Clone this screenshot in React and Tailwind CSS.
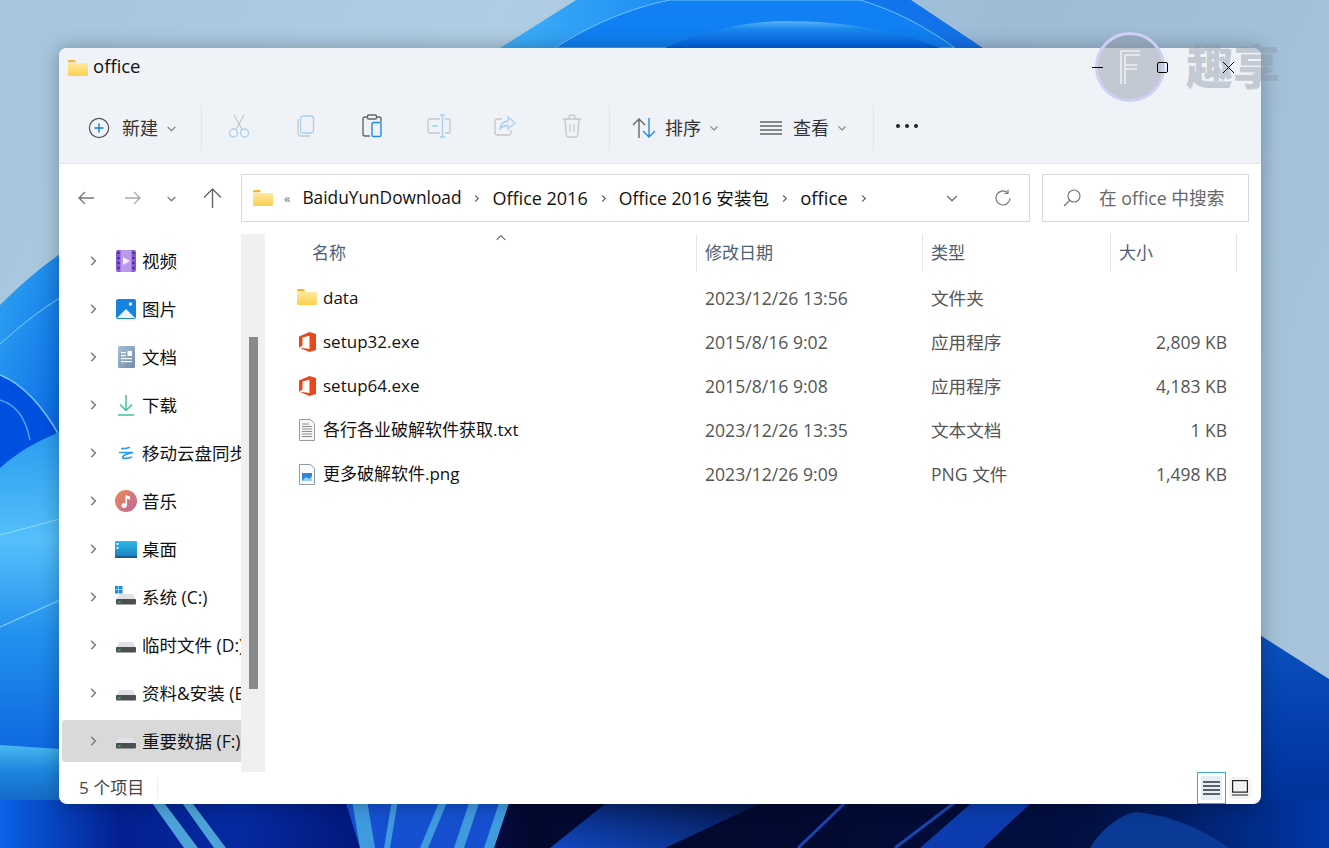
import React from 'react'

const sideItems = [
  { label: '视频', icon: 'video' },
  { label: '图片', icon: 'picture' },
  { label: '文档', icon: 'doc' },
  { label: '下载', icon: 'download' },
  { label: '移动云盘同步盘', icon: 'cloud' },
  { label: '音乐', icon: 'music' },
  { label: '桌面', icon: 'desktop' },
  { label: '系统 (C:)', icon: 'system' },
  { label: '临时文件 (D:)', icon: 'drive' },
  { label: '资料&安装 (E:)', icon: 'drive' },
  { label: '重要数据 (F:)', icon: 'drive', active: true },
]

const files = [
  { name: 'data', date: '2023/12/26 13:56', type: '文件夹', size: '', icon: 'folder' },
  { name: 'setup32.exe', date: '2015/8/16 9:02', type: '应用程序', size: '2,809 KB', icon: 'office' },
  { name: 'setup64.exe', date: '2015/8/16 9:08', type: '应用程序', size: '4,183 KB', icon: 'office' },
  { name: '各行各业破解软件获取.txt', date: '2023/12/26 13:35', type: '文本文档', size: '1 KB', icon: 'txt' },
  { name: '更多破解软件.png', date: '2023/12/26 9:09', type: 'PNG 文件', size: '1,498 KB', icon: 'png' },
]

function FolderIcon({ className }) {
  return (
    <svg className={className} width="20" height="16" viewBox="0 0 20 16">
      <defs>
        <linearGradient id="folderFill" x1="0" y1="0" x2="0" y2="1">
          <stop offset="0" stopColor="#ffe9a0" />
          <stop offset="1" stopColor="#fcd04e" />
        </linearGradient>
      </defs>
      <path d="M0 1.500C0 .7.6 0 1.400 0h5l2 2.200H0z" fill="#f5b52a" />
      <path d="M0 3h18.600c.8 0 1.400.6 1.400 1.400v10.200c0 .8-.6 1.400-1.400 1.400H1.400C.6 16 0 15.400 0 14.600z" fill="url(#folderFill)" />
    </svg>
  )
}

function Chevron({ dir = 'right', size = 10, color = '#777', width = 1.2 }) {
  const d = {
    right: 'M3.500 1.500 7 5 3.500 8.500',
    down: 'M1.500 3.500 5 7l3.500-3.500',
    up: 'M1.500 6.500 5 3l3.500 3.500',
  }[dir]
  return (
    <svg width={size} height={size} viewBox="0 0 10 10" fill="none" stroke={color} strokeWidth={width}>
      <path d={d} />
    </svg>
  )
}

function ToolIcon({ name }) {
  const gray = '#c3c7cb'
  const blue = '#a9cff0'
  if (name === 'new') {
    return (
      <svg width="22" height="22" viewBox="0 0 22 22" fill="none">
        <circle cx="11" cy="11" r="9.600" stroke="#555" strokeWidth="1.200" />
        <path d="M11 6.500v9M6.500 11h9" stroke="#0f7fd8" strokeWidth="1.400" />
      </svg>
    )
  }
  if (name === 'cut') {
    return (
      <svg width="22" height="24" viewBox="0 0 22 24" fill="none" stroke={blue} strokeWidth="1.300">
        <path d="M6 1l8.400 15M16 1L7.600 16" stroke={gray} />
        <circle cx="5.500" cy="19" r="4" />
        <circle cx="16.500" cy="19" r="4" />
      </svg>
    )
  }
  if (name === 'copy') {
    return (
      <svg width="18" height="22" viewBox="0 0 18 22" fill="none" strokeWidth="1.300">
        <path d="M1 4v14c0 1.600 1.200 3 3 3h9" stroke={gray} />
        <rect x="3.500" y="1" width="13" height="17" rx="2.500" stroke={blue} />
      </svg>
    )
  }
  if (name === 'paste') {
    return (
      <svg width="20" height="24" viewBox="0 0 20 24" fill="none" strokeWidth="1.400">
        <path d="M5 3H3C1.800 3 1 3.800 1 5v15c0 1.200.8 2 2 2h5M15 3h2c1 0 2 .8 2 2v3" stroke="#666" />
        <rect x="5.500" y="1" width="9" height="4" rx="1.200" stroke="#666" />
        <rect x="10" y="8.500" width="9" height="14" rx="1.600" stroke="#1f8be0" />
      </svg>
    )
  }
  if (name === 'rename') {
    return (
      <svg width="24" height="24" viewBox="0 0 24 24" fill="none" strokeWidth="1.300">
        <path d="M13 5H3C1.800 5 1 5.800 1 7v10c0 1.200.8 2 2 2h10M18 5h3c1.200 0 2 .8 2 2v10c0 1.200-.8 2-2 2h-3" stroke={gray} />
        <path d="M13 1h5M13 23h5M15.500 1v22M5 12h6" stroke={blue} />
      </svg>
    )
  }
  if (name === 'share') {
    return (
      <svg width="22" height="22" viewBox="0 0 22 22" fill="none" strokeWidth="1.300">
        <path d="M8 4H3.500C2 4 1 5 1 6.500v11C1 19 2 20 3.500 20h11c1.500 0 2.500-1 2.500-2.500V15" stroke={gray} />
        <path d="M14 2l7 6-7 6v-3.500c-4 0-6.500 1-8 4 .3-5 3-8 8-8.500z" stroke={blue} />
      </svg>
    )
  }
  if (name === 'trash') {
    return (
      <svg width="20" height="24" viewBox="0 0 20 24" fill="none" stroke={gray} strokeWidth="1.300">
        <path d="M1 5h18M7 5V3c0-1 .8-2 2-2h2c1.200 0 2 1 2 2v2M3 5l1.200 15.500C4.300 22 5.300 23 6.500 23h7c1.200 0 2.200-1 2.300-2.500L17 5M8 10v8M12 10v8" />
      </svg>
    )
  }
  if (name === 'sort') {
    return (
      <svg width="24" height="22" viewBox="0 0 24 22" fill="none" strokeWidth="1.400">
        <path d="M7 21V2M1 8l6-6 6 6" stroke="#666" />
        <path d="M17 1v19M11 14l6 6 6-6" stroke="#1f8be0" />
      </svg>
    )
  }
  return (
    <svg width="22" height="14" viewBox="0 0 22 14" fill="none" stroke="#666" strokeWidth="1.300">
      <path d="M0 1h22M0 5h22M0 9h22M0 13h22" />
    </svg>
  )
}

function ToolButton({ icon, className }) {
  return (
    <div className={`flex h-[46px] w-[48px] items-center justify-center pb-[4px] ${className || ''}`}>
      <ToolIcon name={icon} />
    </div>
  )
}

function DriveIcon({ win }) {
  return (
    <svg width="22" height="22" viewBox="0 0 22 22">
      {win && (
        <g fill="#1f8ae0">
          <rect x="0" y="0" width="3.500" height="3.500" />
          <rect x="4" y="0" width="3.500" height="3.500" />
          <rect x="0" y="4" width="3.500" height="3.500" />
          <rect x="4" y="4" width="3.500" height="3.500" />
        </g>
      )}
      <path d="M4.500 8h13L21 13H1z" fill="#dfe3e8" />
      <rect x="1" y="13" width="20" height="5.500" rx="1" fill="#4a4f54" />
      <rect x="3.500" y="15.500" width="2" height="1.200" fill="#5fd35f" />
    </svg>
  )
}

function SideIcon({ name }) {
  if (name === 'video') {
    return (
      <svg width="20" height="22" viewBox="0 0 20 22">
        <rect width="20" height="22" rx="2" fill="#8a55d8" />
        <rect x="4.500" y="0" width="11" height="22" fill="#b79aeb" />
        <path d="M7 7l7 4-7 4z" fill="#f3edff" />
        <g fill="#3f2a70">
          <rect x="1.500" y="2" width="2" height="2" />
          <rect x="1.500" y="7" width="2" height="2" />
          <rect x="1.500" y="12" width="2" height="2" />
          <rect x="1.500" y="17" width="2" height="2" />
          <rect x="16.500" y="2" width="2" height="2" />
          <rect x="16.500" y="7" width="2" height="2" />
          <rect x="16.500" y="12" width="2" height="2" />
          <rect x="16.500" y="17" width="2" height="2" />
        </g>
      </svg>
    )
  }
  if (name === 'picture') {
    return (
      <svg width="20" height="20" viewBox="0 0 20 20">
        <rect width="20" height="20" rx="2" fill="#1684dc" />
        <circle cx="14.500" cy="5" r="1.700" fill="#fff" />
        <path d="M1 19l9-9 9 9z" fill="#eef4f9" />
      </svg>
    )
  }
  if (name === 'doc') {
    return (
      <svg width="17" height="22" viewBox="0 0 17 22">
        <defs>
          <linearGradient id="docFill" x1="0" y1="0" x2="1" y2="1">
            <stop offset="0" stopColor="#a9bfd8" />
            <stop offset="1" stopColor="#6f8ba9" />
          </linearGradient>
        </defs>
        <rect width="17" height="22" rx="1.500" fill="url(#docFill)" />
        <g fill="#fff">
          <rect x="3" y="6" width="5" height="1.200" />
          <rect x="3" y="9" width="5" height="1.200" />
          <rect x="9.500" y="5" width="4.500" height="5" />
          <rect x="3" y="12" width="11" height="1.200" />
          <rect x="3" y="15" width="11" height="1.200" />
        </g>
      </svg>
    )
  }
  if (name === 'download') {
    return (
      <svg width="16" height="21" viewBox="0 0 16 21" fill="none" stroke="#3cc3a0" strokeWidth="1.500">
        <path d="M8 0v15M2 9.500l6 6 6-6M0 20h16" />
      </svg>
    )
  }
  if (name === 'cloud') {
    return (
      <svg width="16" height="14" viewBox="0 0 16 14" fill="none" stroke="#2a9af3" strokeWidth="1.700">
        <path d="M3 2.500c3 .4 6 0 9-1.200M1 6.500h14c-4 .8-10 2.500-10.500 4.500-.4 2 5.500 1.800 9.500 0" />
      </svg>
    )
  }
  if (name === 'music') {
    return (
      <svg width="22" height="22" viewBox="0 0 22 22">
        <defs>
          <linearGradient id="musicFill" x1="0" y1="0" x2="1" y2="1">
            <stop offset="0" stopColor="#ee8a4f" />
            <stop offset="1" stopColor="#c0679f" />
          </linearGradient>
        </defs>
        <circle cx="11" cy="11" r="11" fill="url(#musicFill)" />
        <circle cx="9" cy="15.500" r="2.500" fill="#fff" />
        <path d="M10.500 15.500V5l4.500 1.500v3l-3-.8v6.800z" fill="#fff" />
      </svg>
    )
  }
  if (name === 'desktop') {
    return (
      <svg width="22" height="17" viewBox="0 0 22 17">
        <defs>
          <linearGradient id="deskFill" x1="0" y1="0" x2="0" y2="1">
            <stop offset="0" stopColor="#30b8e8" />
            <stop offset="1" stopColor="#1a80c0" />
          </linearGradient>
        </defs>
        <rect width="22" height="16" rx="1" fill="url(#deskFill)" />
        <rect x="1.500" y="2" width="2" height="2" fill="#dff6ff" />
        <rect x="1.500" y="6" width="2" height="2" fill="#dff6ff" />
        <rect y="15" width="22" height="2" fill="#16628f" />
      </svg>
    )
  }
  if (name === 'system') return <DriveIcon win />
  return <DriveIcon />
}

function FileIcon({ name }) {
  if (name === 'folder') return <FolderIcon className="mb-[3px]" />
  if (name === 'office') {
    return (
      <svg width="17" height="20" viewBox="0 0 17 20">
        <path d="M0 4.500 10.500 0 17 2v16l-6.500 2L0 15.500l10.500 1.500V3.800L3.500 5.500v8L0 15.500z" fill="#e8491c" />
      </svg>
    )
  }
  if (name === 'txt') {
    return (
      <svg width="16" height="22" viewBox="0 0 16 22" fill="none">
        <path d="M.5.500h11l4 4v17H.5z" fill="#f7f7f7" stroke="#9a9a9a" />
        <path d="M3 5h7M3 7.500h10M3 10h10M3 12.500h10M3 15h10M3 17.500h10" stroke="#8c8c8c" />
      </svg>
    )
  }
  return (
    <svg width="16" height="21" viewBox="0 0 16 21" fill="none">
      <path d="M.5.500h11l4 4v16H.5z" fill="#fbfbfb" stroke="#8d99ad" />
      <rect x="3" y="9" width="10" height="8" fill="#2f86d8" />
      <path d="M3 17l4-4 3 2 3-3v5z" fill="#9ad0f5" />
    </svg>
  )
}

function Wallpaper() {
  return (
    <svg className="absolute inset-0" width="1329" height="848" viewBox="0 0 1329 848">
      <defs>
        <linearGradient id="sky" x1="0" y1="0" x2="1" y2="0.300">
          <stop offset="0" stopColor="#a6c6de" />
          <stop offset="0.350" stopColor="#b0cde3" />
          <stop offset="0.700" stopColor="#9dbcd6" />
          <stop offset="1" stopColor="#a6c3da" />
        </linearGradient>
        <linearGradient id="bloomOuter" x1="0" y1="0" x2="1" y2="0">
          <stop offset="0" stopColor="#3fb0f8" />
          <stop offset="0.500" stopColor="#0f7df0" />
          <stop offset="1" stopColor="#1470e8" />
        </linearGradient>
        <linearGradient id="bloomInner" x1="0" y1="0" x2="0" y2="1">
          <stop offset="0" stopColor="#5ab2f5" />
          <stop offset="0.300" stopColor="#1a88f0" />
          <stop offset="1" stopColor="#0062e4" />
        </linearGradient>
        <linearGradient id="leftA" x1="0" y1="0" x2="1" y2="1">
          <stop offset="0" stopColor="#2fa5f2" />
          <stop offset="1" stopColor="#0a6ae6" />
        </linearGradient>
        <linearGradient id="leftB" x1="0" y1="0" x2="0" y2="1">
          <stop offset="0" stopColor="#2a9cf0" />
          <stop offset="0.330" stopColor="#55c0fb" />
          <stop offset="0.620" stopColor="#2290ee" />
          <stop offset="1" stopColor="#0c66e0" />
        </linearGradient>
        <linearGradient id="leftC" x1="0" y1="0" x2="0" y2="1">
          <stop offset="0" stopColor="#48b8ee" />
          <stop offset="0.250" stopColor="#1d86de" />
          <stop offset="1" stopColor="#06399a" />
        </linearGradient>
        <linearGradient id="rightBlue" x1="0" y1="0" x2="0" y2="1">
          <stop offset="0" stopColor="#0a52c0" />
          <stop offset="0.600" stopColor="#0238a4" />
          <stop offset="1" stopColor="#012a86" />
        </linearGradient>
        <linearGradient id="floor" x1="0" y1="0" x2="1" y2="0">
          <stop offset="0" stopColor="#0a62e8" />
          <stop offset="0.090" stopColor="#03208f" />
          <stop offset="0.180" stopColor="#052aa0" />
          <stop offset="0.260" stopColor="#021a80" />
          <stop offset="0.400" stopColor="#03082f" />
          <stop offset="0.600" stopColor="#020a30" />
          <stop offset="0.820" stopColor="#021042" />
          <stop offset="1" stopColor="#0038a8" />
        </linearGradient>
        <linearGradient id="ribbon" x1="1" y1="0" x2="0" y2="1">
          <stop offset="0" stopColor="#03123f" />
          <stop offset="1" stopColor="#1048c0" />
        </linearGradient>
      </defs>
      <rect width="1329" height="848" fill="url(#sky)" />

      {/* top bloom */}
      <path d="M500 48 576 0H911L983 48z" fill="url(#bloomOuter)" />
      <path d="M555 48C590 25 630 8 670 0H860C900 12 930 30 955 48z" fill="#1080f2" stroke="#6cc4f4" strokeWidth="1" />
      <path d="M665 48C700 32 745 21 788 21 845 21 900 32 940 48z" fill="url(#bloomInner)" />

      {/* left petals */}
      <path d="M0 305C20 285 40 268 60 254V440L0 420z" fill="url(#leftA)" />
      <path d="M0 344C20 326 40 310 60 298" fill="none" stroke="#7fd0f5" strokeWidth="1" />
      <path d="M0 375C25 385 45 410 60 437V470H0z" fill="#0050e0" />
      <path d="M0 375C25 385 45 410 60 437" fill="none" stroke="#7cc8f4" strokeWidth="1.500" />
      <path d="M0 400C15 405 25 415 30 440" fill="none" stroke="#4aa4f0" strokeWidth="1.500" />
      <path d="M0 468C20 450 40 440 60 432V760H0z" fill="url(#leftB)" />
      <path d="M0 535 60 519M0 627 60 600" fill="none" stroke="#8fdcf8" strokeWidth="1" />
      <path d="M0 745 60 749V848H0z" fill="url(#leftC)" />

      {/* right petal */}
      <path d="M1255 632 1329 679V848H1255z" fill="url(#rightBlue)" />

      {/* bottom ribbons */}
      <rect y="800" width="1329" height="48" fill="url(#floor)" />
      <path d="M150 800h12l36 48h-14zM180 800h10l36 48h-12z" fill="#4da3d8" />
      <path d="M345 800H510L490 848H360z" fill="#1550d0" />
      <path d="M352 800h15l8 48h-15zM392 800h6l-8 48h-6zM440 800h8l-20 48h-8zM470 800h10l-16 48h-10zM500 800h10l-16 48h-10z" fill="#3f9ade" />
      <path d="M610 800H767L665 848H550z" fill="url(#ribbon)" />
      <path d="M848 800 798 848M958 800 895 848" fill="none" stroke="#1a46b0" strokeWidth="3" />
      <path d="M975 800H1034L983 848H920z" fill="#0c3cae" />
      <path d="M1090 848C1100 830 1120 815 1135 812 1170 815 1205 830 1229 848z" fill="#0a3a95" />
    </svg>
  )
}

function Watermark() {
  return (
    <div className="pointer-events-none absolute left-[1095px] top-[32px] flex items-center">
      <div className="flex h-[70px] w-[70px] items-center justify-center rounded-full border-[3px] border-[#cfd0f5] bg-[#8d97a5]/45">
        <svg width="22" height="34" viewBox="0 0 22 34" fill="none" stroke="#ffffff" strokeOpacity="0.7" strokeWidth="1.600">
          <path d="M2 34V1h19M6 34V5h15M6 15h12M6 19h12" />
        </svg>
      </div>
      <span className="ml-[21px] -mt-[8px] whitespace-nowrap font-['Noto_Sans_CJK_SC',sans-serif] text-[47px] font-black leading-none text-[#8d97a5]/45">趣享</span>
    </div>
  )
}

export default function App() {
  return (
    <div className="relative h-[848px] w-[1329px] overflow-hidden font-['Open_Sans','Noto_Sans_CJK_SC',sans-serif] text-[17px] text-[#111]">
      <Wallpaper />
      <div className="relative ml-[59px] mt-[48px] flex h-[756px] w-[1202px] flex-col overflow-hidden rounded-lg bg-white shadow-[0_0_20px_rgba(0,0,0,0.3)]">
        {/* title + toolbar */}
        <div className="h-[116px] shrink-0 border-b border-[#e3e6ea] bg-[#eff3f8]">
          <div className="flex h-[40px] items-center pl-[9px]">
            <FolderIcon />
            <span className="mb-[3px] ml-[5px] text-[18.5px] leading-none">office</span>
            <div className="relative z-10 mb-[2px] ml-auto flex items-center gap-[54px] pr-[26px]">
              <div className="h-px w-[11px] bg-black" />
              <div className="h-[11px] w-[11px] rounded-[2px] border border-black" />
              <svg width="13" height="13" viewBox="0 0 13 13" stroke="#000" strokeWidth="1"><path d="M1 1l11 11M12 1 1 12" /></svg>
            </div>
          </div>
          <div className="mt-[17px] flex h-[46px] items-center text-[#333]">
            <div className="flex w-[142px] items-center pl-[29px]">
              <ToolIcon name="new" />
              <span className="ml-[12px] text-[18px]">新建</span>
              <span className="ml-[8px]"><Chevron dir="down" size={11} color="#888" /></span>
            </div>
            <div className="h-[44px] w-px bg-[#e1e5ea]" />
            <div className="flex w-[407px] items-center">
              <ToolButton icon="cut" className="ml-[13px]" />
              <ToolButton icon="copy" className="ml-[19px]" />
              <ToolButton icon="paste" className="ml-[18px]" />
              <ToolButton icon="rename" className="ml-[19px]" />
              <ToolButton icon="share" className="ml-[18px]" />
              <ToolButton icon="trash" className="ml-[19px]" />
            </div>
            <div className="h-[44px] w-px bg-[#e1e5ea]" />
            <div className="flex w-[263px] items-center">
              <span className="ml-[22px]"><ToolIcon name="sort" /></span>
              <span className="ml-[9px] text-[18px]">排序</span>
              <span className="ml-[8px]"><Chevron dir="down" size={10} color="#888" /></span>
              <span className="ml-[41px]"><ToolIcon name="view" /></span>
              <span className="ml-[11px] text-[18px]">查看</span>
              <span className="ml-[8px]"><Chevron dir="down" size={10} color="#888" /></span>
            </div>
            <div className="h-[44px] w-px bg-[#e1e5ea]" />
            <div className="-mt-[5px] ml-[22px] flex gap-[5px]">
              <div className="h-[4px] w-[4px] rounded-full bg-[#222]" />
              <div className="h-[4px] w-[4px] rounded-full bg-[#222]" />
              <div className="h-[4px] w-[4px] rounded-full bg-[#222]" />
            </div>
          </div>
        </div>

        {/* address row */}
        <div className="flex h-[70px] shrink-0 items-start pt-[10px]">
          <div className="flex h-[48px] w-[182px] shrink-0 items-center pl-[19px]">
            <svg width="16" height="14" viewBox="0 0 16 14" fill="none" stroke="#777" strokeWidth="1.300"><path d="M16 7H1M7 1 1 7l6 6" /></svg>
            <svg className="ml-[31px]" width="16" height="14" viewBox="0 0 16 14" fill="none" stroke="#aaa" strokeWidth="1.300"><path d="M0 7h15M9 1l6 6-6 6" /></svg>
            <span className="ml-[25px]"><Chevron dir="down" size={11} /></span>
            <svg className="ml-[26px]" width="19" height="20" viewBox="0 0 19 20" fill="none" stroke="#666" strokeWidth="1.400"><path d="M9.500 20V1M1 9.500l8.500-8.500 8.500 8.500" /></svg>
          </div>
          <div className="flex h-[48px] w-[789px] shrink-0 items-center border border-[#d9d9d9] bg-white pl-[11px]">
            <FolderIcon />
            <span className="ml-[11px] text-[13px] leading-none text-[#777]">«</span>
            <span className="ml-[12px] text-[17.3px]">BaiduYunDownload</span>
            <span className="mx-[11px]"><Chevron size={9} color="#555" /></span>
            <span className="text-[18px]">Office 2016</span>
            <span className="mx-[11px]"><Chevron size={9} color="#555" /></span>
            <span className="text-[17.6px]">Office 2016 安装包</span>
            <span className="mx-[11px]"><Chevron size={9} color="#555" /></span>
            <span className="text-[18.5px]">office</span>
            <span className="ml-[11px]"><Chevron size={9} color="#555" /></span>
            <span className="ml-auto"><Chevron dir="down" size={14} color="#666" width={0.9} /></span>
            <svg className="ml-[35px] mr-[17px]" width="18" height="18" viewBox="0 0 18 18" fill="none" stroke="#777" strokeWidth="1.200"><path d="M16 9a7 7 0 1 1-2.500-5.400M14 .8v3.700h-3.700" /></svg>
          </div>
          <div className="ml-[12px] flex h-[48px] w-[207px] shrink-0 items-center border border-[#d9d9d9] bg-white pl-[20px] text-[17.7px] text-[#666]">
            <svg width="18" height="18" viewBox="0 0 18 18" fill="none" stroke="#777" strokeWidth="1.200"><circle cx="11" cy="7" r="6" /><path d="M6.500 11.500 1 17" /></svg>
            <span className="ml-[18px]">在 office 中搜索</span>
          </div>
        </div>

        {/* body */}
        <div className="flex min-h-0 flex-1">
          <div className="w-[182px] shrink-0 overflow-hidden pt-[3px] text-[17.5px]">
            {sideItems.map((item) => (
              <div key={item.label} className="ml-[3px] flex h-[48px] items-center">
                <div className={`flex h-[42px] w-full items-center overflow-hidden rounded-l-[3px] ${item.active ? 'bg-[#d9d9d9]' : ''}`}>
                  <span className="ml-[25px] shrink-0"><Chevron size={12} color="#808080" width={1.300} /></span>
                  <span className="ml-[15px] flex w-[24px] shrink-0 justify-center"><SideIcon name={item.icon} /></span>
                  <span className="ml-[4px] whitespace-nowrap">{item.label}</span>
                </div>
              </div>
            ))}
          </div>
          <div className="flex w-[23px] shrink-0 justify-center bg-[#f0f0f0] pt-[103px]">
            <div className="ml-[1px] h-[352px] w-[9px] bg-[#8a8a8a]" />
          </div>
          <div className="min-w-0 flex-1 border-l border-[#f2f2f2]">
            <div className="relative flex h-[38px] items-center text-[#4c607a]">
              <div className="flex h-full w-[432px] items-center border-r border-[#e5e5e5] pl-[47px]">名称</div>
              <div className="flex h-full w-[226px] items-center border-r border-[#e5e5e5] pl-[8px]">修改日期</div>
              <div className="flex h-full w-[188px] items-center border-r border-[#e5e5e5] pl-[8px]">类型</div>
              <div className="flex h-full w-[126px] items-center border-r border-[#e5e5e5] pl-[8px]">大小</div>
              <div className="absolute left-[230px] top-[-2px]"><Chevron dir="up" size={12} color="#666" width={0.9} /></div>
            </div>
            <div className="pt-[4px]">
              {files.map((f) => (
                <div key={f.name} className="flex h-[44px] items-center">
                  <div className="flex w-[432px] items-center pl-[32px]">
                    <span className="flex w-[20px] shrink-0 justify-center"><FileIcon name={f.icon} /></span>
                    <span className="ml-[6px] whitespace-nowrap">{f.name}</span>
                  </div>
                  <div className="w-[226px] pl-[8px] text-[17.6px] text-[#555]">{f.date}</div>
                  <div className="w-[188px] pl-[8px] text-[17.6px] text-[#555]">{f.type}</div>
                  <div className="w-[116px] text-right text-[17.5px] text-[#555]">{f.size}</div>
                </div>
              ))}
            </div>
          </div>
        </div>

        {/* status bar */}
        <div className="relative flex h-[32px] shrink-0 items-center pl-[20px] text-[#444]">
          <span>5 个项目</span>
          <div className="ml-[13px] h-[20px] w-px bg-[#ededed]" />
          <div className="ml-auto mr-[10px] flex items-center gap-[3px]">
            <div className="flex h-[32px] w-[29px] items-center justify-center border border-[#3ea8dc] bg-white p-[3px]">
              <div className="flex h-full w-full items-center justify-center bg-[#e3eef5]">
                <svg width="17" height="14" viewBox="0 0 17 14" stroke="#333" strokeWidth="1.300"><path d="M0 1h17M0 5h17M0 9h17M0 13h17" /></svg>
              </div>
            </div>
            <div className="flex h-[22px] w-[22px] items-center justify-center rounded-[3px] bg-[#f3f3f3]">
              <svg width="16" height="16" viewBox="0 0 16 16" fill="none" stroke="#222" strokeWidth="1.200"><rect x=".6" y=".6" width="14.800" height="11.500" /><path d="M0 15h16" /></svg>
            </div>
          </div>
        </div>
      </div>
      <Watermark />
    </div>
  )
}
